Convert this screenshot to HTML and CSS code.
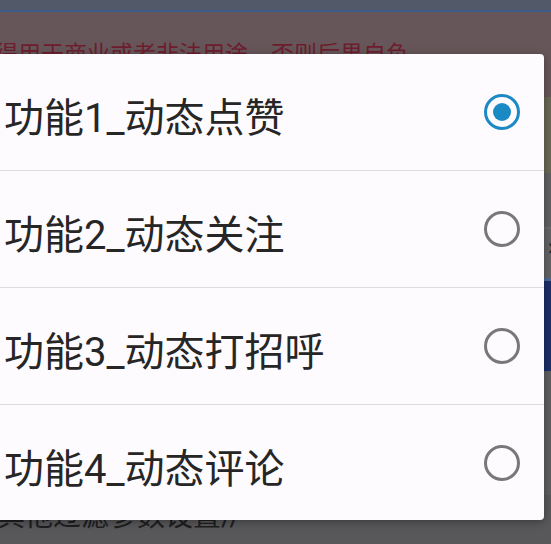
FILE: index.html
```html
<!DOCTYPE html>
<html lang="zh-CN">
<head>
    <meta charset="UTF-8">
    <meta name="viewport" content="width=device-width, initial-scale=1.0">
    <title>功能选择</title>
    <link rel="stylesheet" href="styles.css">
</head>
<body>
    <div id="screen">
        <div class="status-bar"></div>
        <div class="status-line"></div>
        <div class="notice">
            <p class="notice-text">得用于商业或者非法用途，否则后果自负</p>
        </div>
        <div class="panel olive"></div>
        <div class="panel grey"></div>
        <div class="panel grey-light"><span class="mark">›</span></div>
        <div class="panel navy"></div>
        <div class="panel grey-low"></div>
        <div class="footer">
            <p class="footer-text">其他过滤参数设置//</p>
        </div>
    </div>

    <div id="dialog">
        <div class="option">
            <span class="label">功能1_动态点赞</span>
            <span class="radio checked"></span>
        </div>
        <div class="option">
            <span class="label">功能2_动态关注</span>
            <span class="radio"></span>
        </div>
        <div class="option">
            <span class="label">功能3_动态打招呼</span>
            <span class="radio"></span>
        </div>
        <div class="option">
            <span class="label">功能4_动态评论</span>
            <span class="radio"></span>
        </div>
    </div>
</body>
</html>
```

FILE: styles.css
```css
* {
    box-sizing: border-box;
}
html, body {
    margin: 0;
    padding: 0;
    height: 100%;
    overflow: hidden;
}
body {
    font-family: Roboto, "Noto Sans CJK SC", sans-serif;
    background-color: #58575a;
}

#screen {
    display: flex;
    flex-direction: column;
    height: 544px;
}
.status-bar {
    height: 10px;
    background-color: #525a6a;
}
.status-line {
    height: 2px;
    background-color: #3e5c88;
}
.notice {
    height: 85px;
    background-color: #66565a;
    overflow: hidden;
}
.notice-text {
    margin: 0;
    padding-top: 28px;
    margin-left: -5px;
    font-size: 23px;
    line-height: 30px;
    color: #6e1d2d;
    white-space: nowrap;
}
.panel.olive {
    height: 76px;
    background-color: #6a6956;
}
.panel.grey {
    height: 56px;
    background-color: #606062;
    border-bottom: 2px solid #6c6c6e;
}
.panel.grey-light {
    height: 52px;
    background-color: #646466;
    border-bottom: 3px solid #4e6a94;
    position: relative;
}
.mark {
    position: absolute;
    right: -4px;
    top: 4px;
    font-size: 24px;
    color: #222;
}
.panel.navy {
    height: 90px;
    background-color: #1c2f68;
}
.panel.grey-low {
    height: 124px;
    background-color: #5e5e60;
}
.footer {
    flex: 1;
    background-color: #58575a;
    overflow: hidden;
}
.footer-text {
    margin: 0;
    margin-left: -3px;
    margin-top: 4px;
    font-size: 28px;
    line-height: 36px;
    color: #1e1e1e;
    white-space: nowrap;
}

/* 선택 다이얼로그 */
#dialog {
    position: absolute;
    top: 54px;
    left: 0;
    width: 544px;
    height: 466px;
    background-color: #fdfbfe;
    border-radius: 0 4px 4px 0;
    box-shadow: 0 2px 8px rgba(0, 0, 0, 0.35);
    overflow: hidden;
}
.option {
    height: 117px;
    display: flex;
    align-items: center;
    justify-content: space-between;
    padding: 0 24px 0 4px;
    border-top: 1.5px solid #dedcdf;
}
.option:first-child {
    height: 116px;
    border-top: none;
}
.label {
    font-size: 40px;
    color: #262626;
    padding-top: 6px;
}
.radio {
    width: 36px;
    height: 36px;
    border: 3.5px solid #787878;
    border-radius: 50%;
    display: flex;
    align-items: center;
    justify-content: center;
}
.radio.checked {
    border-color: #1b8ac4;
}
.radio.checked::after {
    content: "";
    width: 18px;
    height: 18px;
    border-radius: 50%;
    background-color: #1b8ac4;
}
```
